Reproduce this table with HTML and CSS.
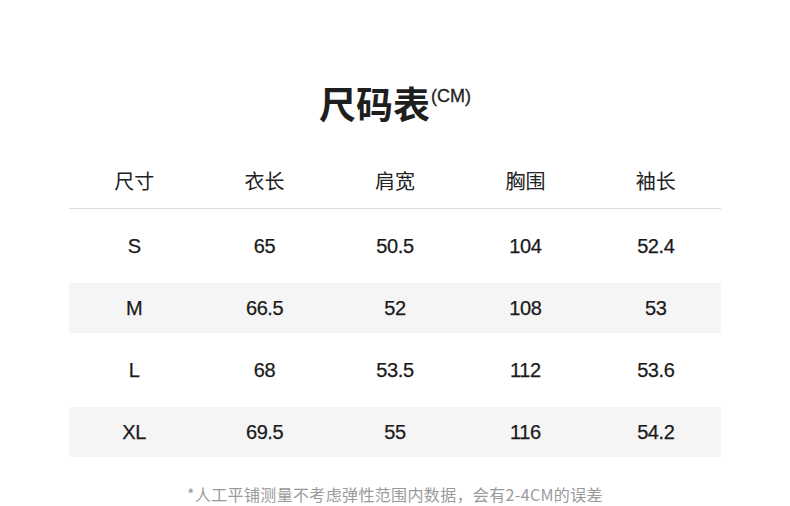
FILE: index.html
```html
<!DOCTYPE html>
<html lang="zh">
<head>
<meta charset="utf-8">
<link rel="stylesheet" href="styles.css">
</head>
<body>
<div class="page">
  <h1 class="title">尺码表<span class="unit">(CM)</span></h1>
  <div class="table">
    <div class="head">
      <div>尺寸</div><div>衣长</div><div>肩宽</div><div>胸围</div><div>袖长</div>
    </div>
    <div class="rows">
      <div class="row"><div>S</div><div>65</div><div>50.5</div><div>104</div><div>52.4</div></div>
      <div class="row alt"><div>M</div><div>66.5</div><div>52</div><div>108</div><div>53</div></div>
      <div class="row"><div>L</div><div>68</div><div>53.5</div><div>112</div><div>53.6</div></div>
      <div class="row alt"><div>XL</div><div>69.5</div><div>55</div><div>116</div><div>54.2</div></div>
    </div>
  </div>
  <p class="note">*人工平铺测量不考虑弹性范围内数据，会有2-4CM的误差</p>
</div>
</body>
</html>
```
FILE: styles.css
```css
html, body {
  margin: 0;
  padding: 0;
  background: #fff;
}
body {
  font-family: "Liberation Sans", "Noto Sans CJK SC", sans-serif;
  color: #222;
}
.page {
  width: 790px;
  display: flex;
  flex-direction: column;
  align-items: center;
}
.title {
  margin: 79px 0 0;
  height: 48px;
  line-height: 48px;
  font-size: 37px;
  font-weight: 700;
  font-family: "Noto Sans CJK SC", sans-serif;
  color: #1e1e1e;
  display: flex;
  align-items: flex-start;
}
.unit {
  font-family: "Liberation Sans", sans-serif;
  font-size: 18px;
  font-weight: 400;
  line-height: 22px;
  margin-top: 6px;
  margin-left: 1px;
  -webkit-text-stroke: 0.3px #1e1e1e;
}
.table {
  width: 652px;
  margin-top: 31px;
}
.head, .row {
  display: grid;
  grid-template-columns: repeat(5, 1fr);
  text-align: center;
}
.head {
  height: 50px;
  line-height: 46px;
  font-family: "Noto Sans CJK SC", sans-serif;
  font-size: 20px;
  color: #222;
  border-bottom: 1px solid #dcdcdc;
}
.rows {
  display: flex;
  flex-direction: column;
  gap: 12px;
  padding-top: 12px;
}
.row {
  height: 50px;
  line-height: 50px;
  font-size: 20px;
  letter-spacing: -0.4px;
  color: #1a1a1a;
  -webkit-text-stroke: 0.25px #1a1a1a;
}
.row.alt {
  background: #f5f5f5;
}
.note {
  margin: 29px 0 0;
  font-family: "Noto Sans CJK SC", sans-serif;
  font-size: 16px;
  line-height: 17px;
  letter-spacing: 0.35px;
  color: #9a9a9a;
}
```
